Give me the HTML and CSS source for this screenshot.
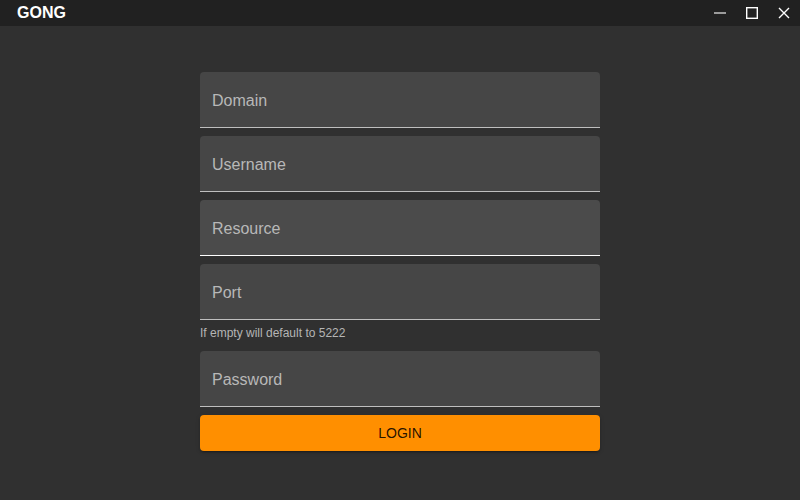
FILE: index.html
```html
<!DOCTYPE html>
<html>
<head>
<meta charset="utf-8">
<link rel="stylesheet" href="styles.css">
</head>
<body>
<div class="titlebar">
  <div class="title">GONG</div>
  <div class="controls">
    <span class="ctl"><svg width="12" height="12" viewBox="0 0 12 12"><path d="M0 6h12" stroke="#d0d0d0" stroke-width="1.4"/></svg></span>
    <span class="ctl"><svg width="12" height="12" viewBox="0 0 12 12"><rect x="0.7" y="0.7" width="10.6" height="10.6" fill="none" stroke="#fff" stroke-width="1.4"/></svg></span>
    <span class="ctl"><svg width="12" height="12" viewBox="0 0 12 12"><path d="M1 1L11 11M11 1L1 11" stroke="#fff" stroke-width="1.4"/></svg></span>
  </div>
</div>
<main class="main">
  <form class="form">
    <div class="field"><span class="label">Domain</span></div>
    <div class="field"><span class="label">Username</span></div>
    <div class="field hover"><span class="label">Resource</span></div>
    <div class="group">
      <div class="field"><span class="label">Port</span></div>
      <div class="helper">If empty will default to 5222</div>
    </div>
    <div class="field"><span class="label">Password</span></div>
    <button type="button" class="login">LOGIN</button>
  </form>
</main>
</body>
</html>
```
FILE: styles.css
```css
html, body {
  margin: 0;
  padding: 0;
  height: 100%;
  background: #303030;
  font-family: "Liberation Sans", Arial, sans-serif;
}
.titlebar {
  height: 26px;
  background: #212121;
  display: flex;
  align-items: center;
  justify-content: space-between;
}
.title {
  color: #fff;
  font-weight: bold;
  font-size: 16px;
  padding-left: 17px;
}
.controls {
  display: flex;
  align-items: center;
  gap: 20px;
  padding-right: 10px;
}
.ctl {
  display: flex;
  width: 12px;
  height: 12px;
}
.main {
  display: flex;
  justify-content: center;
  padding-top: 46px;
}
.form {
  width: 400px;
  display: flex;
  flex-direction: column;
  gap: 8px;
}
.group {
  display: flex;
  flex-direction: column;
}
.field {
  height: 55px;
  background: #464646;
  border-radius: 4px 4px 0 0;
  border-bottom: 1px solid #bfbfbf;
  display: flex;
  align-items: center;
  padding-left: 12px;
}
.field.hover {
  background: #4b4b4b;
  border-bottom-color: #ffffff;
}
.label {
  color: #b8b8b8;
  font-size: 16px;
  line-height: 1;
  padding-top: 2px;
}
.helper {
  color: #b5b5b5;
  font-size: 12px;
  line-height: 20px;
  margin-top: 3px;
}
.login {
  height: 36px;
  border: none;
  border-radius: 4px;
  background: #ff8f00;
  color: rgba(0,0,0,0.87);
  font-family: "Liberation Sans", Arial, sans-serif;
  font-size: 14px;
  box-shadow: 0 3px 1px -2px rgba(0,0,0,0.2), 0 2px 2px 0 rgba(0,0,0,0.14), 0 1px 5px 0 rgba(0,0,0,0.12);
  padding: 0;
}
```
